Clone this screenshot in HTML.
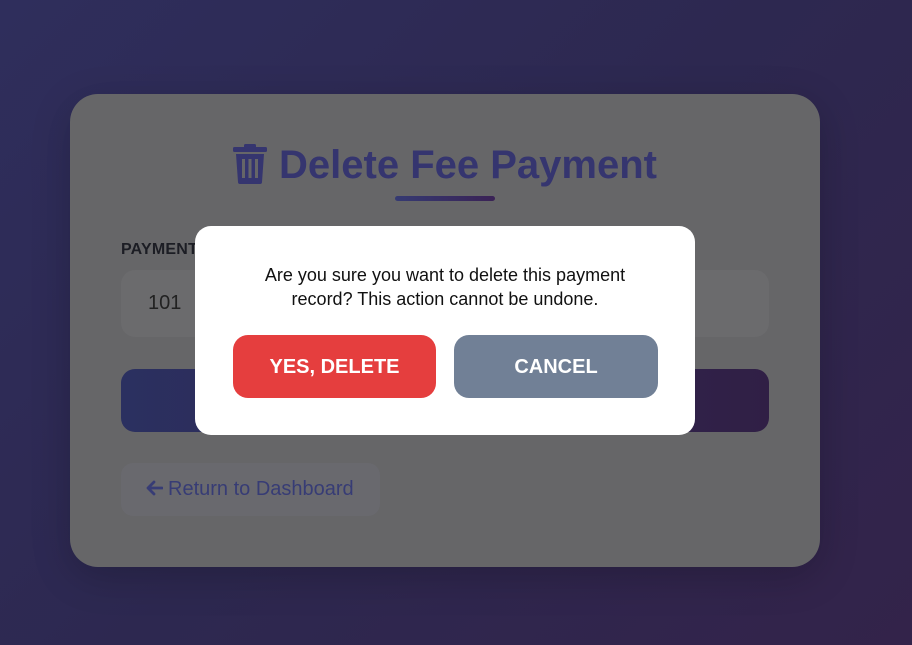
<!DOCTYPE html>
<html><head><meta charset="utf-8"><style>
*{margin:0;padding:0;box-sizing:border-box}
html,body{width:912px;height:645px;overflow:hidden}
body{background:linear-gradient(135deg,#2f2e5c 0%,#2d2850 50%,#33234a 100%);font-family:"Liberation Sans",Arial,sans-serif;position:relative}
.card{position:absolute;left:70px;top:94px;width:750px;height:473px;background:#666668;border-radius:28px;box-shadow:0 10px 40px rgba(0,0,0,.2)}
.title{position:absolute;left:-11px;width:912px;top:143px;text-align:center;font-size:40px;font-weight:bold;color:#35356f;white-space:nowrap}
.title svg{vertical-align:-6px;margin-right:12px}
.uline{position:absolute;left:395px;top:196px;width:100px;height:5px;border-radius:3px;background:linear-gradient(90deg,#353a72,#3a2255)}
.label{position:absolute;left:121px;top:241px;font-size:16px;font-weight:bold;color:#1c1d24;letter-spacing:.2px}
.input{position:absolute;left:121px;top:270px;width:648px;height:67px;background:#6b6b6d;border-radius:14px;font-size:20px;color:#222;padding:22px 0 0 27px}
.submit{position:absolute;left:121px;top:369px;width:648px;height:63px;border-radius:14px;background:linear-gradient(90deg,#2b3060,#301f45)}
.ret{position:absolute;left:121px;top:463px;width:259px;height:53px;border-radius:12px;background:#69696e;color:#373c75;font-size:20px;padding:15px 0 0 25px;white-space:nowrap}
.ret svg{vertical-align:-1px;margin-right:5px}
.modal{position:absolute;left:195px;top:226px;width:500px;height:209px;background:#fff;border-radius:16px}
.msg{position:absolute;left:0;width:500px;top:37px;text-align:center;font-size:18px;line-height:24px;color:#111}
.btn{position:absolute;top:109px;height:63px;border-radius:15px;color:#fff;font-weight:bold;font-size:20px;text-align:center;line-height:64px}
.yes{left:38px;width:203px;background:#e53e3e}
.no{left:259px;width:204px;background:#718096}
</style></head><body>
<div class="card"></div>
<div class="title"><svg width="34" height="40" viewBox="0 0 34 40"><rect x="0" y="3" width="34" height="5" rx="1.5" fill="#35356f"/><rect x="11" y="0" width="12" height="5" rx="1.5" fill="#35356f"/><path d="M3 10h28l-2 28a2 2 0 0 1-2 2H7a2 2 0 0 1-2-2z" fill="#35356f"/><rect x="9" y="15" width="3" height="19" fill="#666668"/><rect x="15.5" y="15" width="3" height="19" fill="#666668"/><rect x="22" y="15" width="3" height="19" fill="#666668"/></svg>Delete Fee Payment</div>
<div class="uline"></div>
<div class="label">PAYMENT</div>
<div class="input">101</div>
<div class="submit"></div>
<div class="ret"><svg width="17" height="16" viewBox="0 0 17 16"><path d="M8 2L2 8l6 6M2.5 8H16" fill="none" stroke="#373c75" stroke-width="2.8" stroke-linecap="round" stroke-linejoin="round"/></svg>Return to Dashboard</div>
<div class="modal">
<div class="msg">Are you sure you want to delete this payment<br>record? This action cannot be undone.</div>
<div class="btn yes">YES, DELETE</div>
<div class="btn no">CANCEL</div>
</div>
</body></html>
